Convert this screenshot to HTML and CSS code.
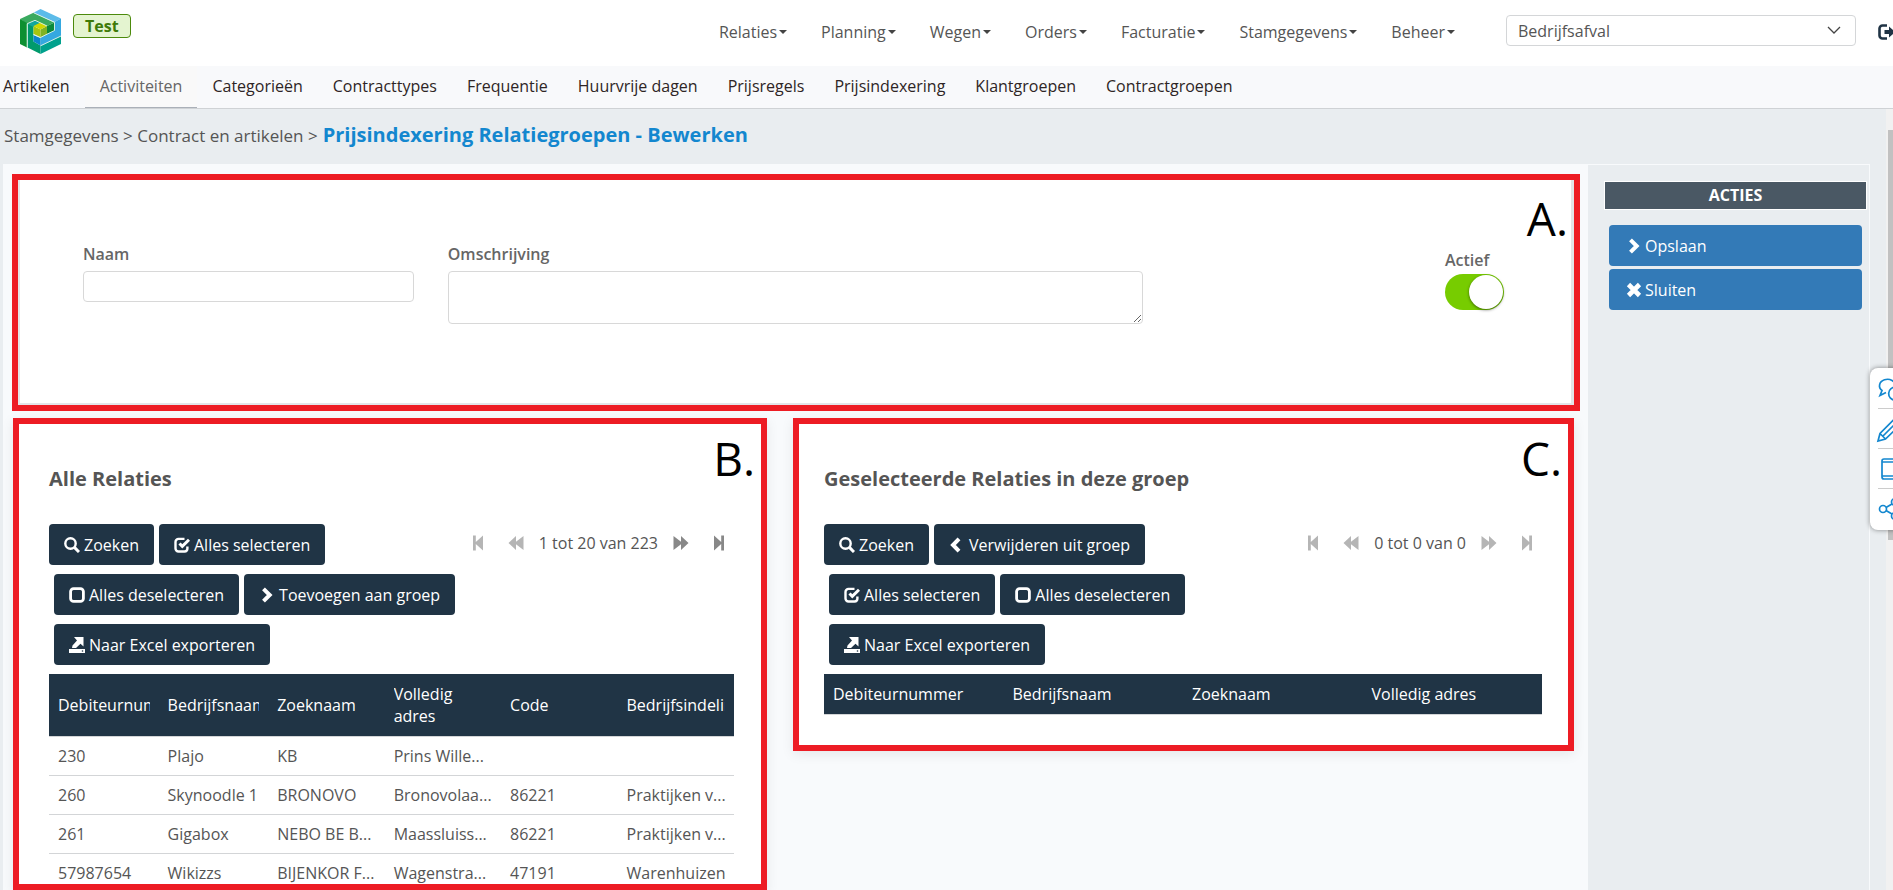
FILE: index.html
```html
<!DOCTYPE html>
<html lang="nl">
<head>
<meta charset="utf-8">
<title>Prijsindexering Relatiegroepen - Bewerken</title>
<link rel="stylesheet" href="styles.css">
</head>
<body>
<svg class="sprite" aria-hidden="true">
  <symbol id="i-search" viewBox="0 0 16 16"><circle cx="6.500" cy="6.500" r="5.200" fill="none" stroke="currentColor" stroke-width="2.400"/><path d="M10.400 10.400L15 15" stroke="currentColor" stroke-width="3"/></symbol>
  <symbol id="i-check" viewBox="0 0 16 16"><path d="M10.500 1.900H4.500A3 3 0 0 0 1.500 4.900V11.500A3 3 0 0 0 4.500 14.500H10.500A3 3 0 0 0 13.400 11.500V9.500" fill="none" stroke="currentColor" stroke-width="2.400"/><path d="M5.500 6.500L8.300 9.400L15 2.700" fill="none" stroke="currentColor" stroke-width="3"/></symbol>
  <symbol id="i-box" viewBox="0 0 16 16"><rect x="1.600" y="1.600" width="12.800" height="12.800" rx="3" fill="none" stroke="currentColor" stroke-width="2.800"/></symbol>
  <symbol id="i-right" viewBox="0 0 16 16"><path d="M4.500 1.800L10.700 8L4.500 14.200" fill="none" stroke="currentColor" stroke-width="4"/></symbol>
  <symbol id="i-left" viewBox="0 0 16 16"><path d="M10 1.800L4 8L10 14.200" fill="none" stroke="currentColor" stroke-width="4"/></symbol>
  <symbol id="i-export" viewBox="0 0 16 16"><path d="M0 12H16V16H0zM5 0H14.500V9.500L11.500 6.700L7 11H3L3.500 8.500L8 3.500z" fill="currentColor"/><circle cx="13.500" cy="14" r="0.800" fill="#203445"/></symbol>
  <symbol id="i-cross" viewBox="0 0 16 16"><path d="M2.500 2.500L13.500 13.500M13.500 2.500L2.500 13.500" stroke="currentColor" stroke-width="4.600"/></symbol>
  <symbol id="i-first" viewBox="0 0 16 16"><path d="M3 .5h2.800V7L13 .5v15L5.800 9V15.500H3z" fill="currentColor"/></symbol>
  <symbol id="i-prev" viewBox="0 0 16 16"><path d="M.5 8L8 1v5.800L15.500 1v14L8 9.200V15z" fill="currentColor"/></symbol>
  <symbol id="i-next" viewBox="0 0 16 16"><path d="M15.500 8L8 1v5.800L.5 1v14L8 9.200V15z" fill="currentColor"/></symbol>
  <symbol id="i-last" viewBox="0 0 16 16"><path d="M13 .5h-2.800V7L3 .5v15L10.200 9V15.500H13z" fill="currentColor"/></symbol>
</svg>

<header class="topbar">
  <a class="logo" href="#" aria-label="Home">
    <svg width="42" height="46" viewBox="0 0 42 46">
      <path d="M13.500 3.700L20.500 0L41 9.500L34.500 13z" fill="#5cbbe9"/>
      <path d="M34.500 13L41 9.500V27L20.500 37V28.500L34.500 21z" fill="#35a8e0"/>
      <path d="M0 10L13.500 3.700L34.500 13.500L27 17L15 11.500L7 15z" fill="#3aaa5f"/>
      <path d="M27 17L34.500 13.500V21.500L27 25z" fill="#0c8a3a"/>
      <path d="M0 10L7 14V38.500L0 35z" fill="#0d8f31"/>
      <path d="M7.500 15L15 11.500L20.500 14L13.500 17.500V32.500L20.500 36.500V45L7.500 38.500z" fill="#009a6c"/>
      <path d="M7.500 15L15 11.500L27 17V18L20.500 14L13.500 18z" fill="#12a79c"/>
      <path d="M13.500 26L20.500 29V36.500L13.500 32.500z" fill="#0a84cb"/>
      <path d="M20.500 37L41 27V35L20.500 45z" fill="#00a18d"/>
      <path d="M13.500 17L20.500 20.500V28.500L13.500 25z" fill="#a6c50f"/>
      <path d="M20.500 20.500L27 17V25L20.500 28.500z" fill="#7fb224"/>
      <path d="M13.500 17L20.500 13.500L27 17L20.500 20.500z" fill="#cfd800"/>
      <path d="M7.200 38.500V14.700L15 11.300L27 17M13.500 3.700L34.500 13.300V21.500L20.500 28.500L13.500 25.500M20.500 36.800L41 27" fill="none" stroke="#dff3ea" stroke-width=".9"/>
    </svg>
  </a>
  <span class="env">Test</span>
  <nav class="mainnav">
    <a href="#">Relaties</a><a href="#">Planning</a><a href="#">Wegen</a><a href="#">Orders</a><a href="#">Facturatie</a><a href="#">Stamgegevens</a><a href="#">Beheer</a>
  </nav>
  <div class="picker">
    <select aria-label="Afdeling"><option>Bedrijfsafval</option></select>
    <svg width="14" height="8" viewBox="0 0 14 8"><path d="M1 1L7 7L13 1" fill="none" stroke="#444" stroke-width="1.300"/></svg>
  </div>
  <a class="logout" href="#" aria-label="Uitloggen">
    <svg width="18" height="16" viewBox="0 0 18 16"><path d="M9 1.500H4.500A3 3 0 0 0 1.500 4.500V11.500A3 3 0 0 0 4.500 14.500H9" fill="none" stroke="#203445" stroke-width="2.600"/><path d="M6.500 6H11V2.500L17.500 8L11 13.500V10H6.500z" fill="#203445"/></svg>
  </a>
</header>

<nav class="subnav">
  <a href="#">Artikelen</a><a href="#" class="active">Activiteiten</a><a href="#">Categorieën</a><a href="#">Contracttypes</a><a href="#">Frequentie</a><a href="#">Huurvrije dagen</a><a href="#">Prijsregels</a><a href="#">Prijsindexering</a><a href="#">Klantgroepen</a><a href="#">Contractgroepen</a>
</nav>

<div class="page">
  <div class="page-body">
    <div class="crumbs">
      <span>Stamgegevens &gt; Contract en artikelen &gt;</span>
      <h1>Prijsindexering Relatiegroepen - Bewerken</h1>
    </div>
    <div class="columns">
      <main class="content">
        <section class="marked details">
          <span class="mark">A.</span>
          <form class="card form">
            <div class="field name"><label for="naam">Naam</label><input id="naam" type="text"></div>
            <div class="field desc"><label for="oms">Omschrijving</label><textarea id="oms"></textarea></div>
            <div class="field active-field"><label for="actief">Actief</label><input id="actief" class="switch" type="checkbox" role="switch" checked></div>
          </form>
        </section>
        <div class="lists">
          <section class="marked list all">
            <span class="mark">B.</span>
            <h2>Alle Relaties</h2>
            <div class="toolbar">
              <div class="buttons">
                <div class="row"><button class="btn"><svg><use href="#i-search"/></svg>Zoeken</button><button class="btn"><svg><use href="#i-check"/></svg>Alles selecteren</button></div>
                <div class="row indent"><button class="btn"><svg><use href="#i-box"/></svg>Alles deselecteren</button><button class="btn"><svg><use href="#i-right"/></svg>Toevoegen aan groep</button></div>
                <div class="row indent"><button class="btn"><svg><use href="#i-export"/></svg>Naar Excel exporteren</button></div>
              </div>
              <div class="pager">
                <button disabled aria-label="Eerste"><svg><use href="#i-first"/></svg></button>
                <button disabled aria-label="Vorige"><svg><use href="#i-prev"/></svg></button>
                <span>1 tot 20 van 223</span>
                <button aria-label="Volgende"><svg><use href="#i-next"/></svg></button>
                <button aria-label="Laatste"><svg><use href="#i-last"/></svg></button>
              </div>
            </div>
            <table>
              <colgroup><col class="w16"><col class="w16"><col class="w17"><col class="w17"><col class="w17"><col class="w17"></colgroup>
              <thead><tr><th><span>Debiteurnummer</span></th><th><span>Bedrijfsnaam</span></th><th><span>Zoeknaam</span></th><th><span>Volledig adres</span></th><th><span>Code</span></th><th><span>Bedrijfsindeling</span></th></tr></thead>
              <tbody>
                <tr><td>230</td><td>Plajo</td><td>KB</td><td>Prins Wille...</td><td></td><td></td></tr>
                <tr><td>260</td><td>Skynoodle 1</td><td>BRONOVO</td><td>Bronovolaa...</td><td>86221</td><td>Praktijken v...</td></tr>
                <tr><td>261</td><td>Gigabox</td><td>NEBO BE B...</td><td>Maassluiss...</td><td>86221</td><td>Praktijken v...</td></tr>
                <tr><td>57987654</td><td>Wikizzs</td><td>BIJENKOR F...</td><td>Wagenstra...</td><td>47191</td><td>Warenhuizen</td></tr>
              </tbody>
            </table>
          </section>
          <section class="marked list selected">
            <span class="mark">C.</span>
            <h2>Geselecteerde Relaties in deze groep</h2>
            <div class="toolbar">
              <div class="buttons">
                <div class="row"><button class="btn"><svg><use href="#i-search"/></svg>Zoeken</button><button class="btn"><svg><use href="#i-left"/></svg>Verwijderen uit groep</button></div>
                <div class="row indent"><button class="btn"><svg><use href="#i-check"/></svg>Alles selecteren</button><button class="btn"><svg><use href="#i-box"/></svg>Alles deselecteren</button></div>
                <div class="row indent"><button class="btn"><svg><use href="#i-export"/></svg>Naar Excel exporteren</button></div>
              </div>
              <div class="pager">
                <button disabled aria-label="Eerste"><svg><use href="#i-first"/></svg></button>
                <button disabled aria-label="Vorige"><svg><use href="#i-prev"/></svg></button>
                <span>0 tot 0 van 0</span>
                <button disabled aria-label="Volgende"><svg><use href="#i-next"/></svg></button>
                <button disabled aria-label="Laatste"><svg><use href="#i-last"/></svg></button>
              </div>
            </div>
            <table>
              <thead><tr><th>Debiteurnummer</th><th>Bedrijfsnaam</th><th>Zoeknaam</th><th>Volledig adres</th></tr></thead>
            </table>
          </section>
        </div>
      </main>
      <aside class="actions">
        <h3>ACTIES</h3>
        <button class="action"><svg><use href="#i-right"/></svg>Opslaan</button>
        <button class="action"><svg><use href="#i-cross"/></svg>Sluiten</button>
      </aside>
    </div>
  </div>
  <div class="scrolltrack"><div class="thumb"></div></div>
</div>

<div class="dock">
  <a href="#" aria-label="Chat"><svg width="24" height="24" viewBox="0 0 24 24"><path d="M8 15.500L2 18.500L4 13.500A8 6.500 0 1 1 17.500 9"/><path d="M22 21A6.500 6.500 0 1 1 22.500 13V20z"/></svg></a>
  <a href="#" aria-label="Notitie"><svg width="24" height="24" viewBox="0 0 24 24"><path d="M0 24L2 16.500L15 3.500L21 9L7.500 22zM2 16.500L7.500 22M5 19L17.500 6.500"/></svg></a>
  <a href="#" aria-label="Apparaat"><svg width="24" height="24" viewBox="0 0 24 24"><rect x="4" y="2" width="17" height="20" rx="2"/><path d="M4 5H21M4 19H21"/></svg></a>
  <a href="#" aria-label="Delen"><svg width="24" height="24" viewBox="0 0 24 24"><circle cx="5" cy="12" r="3.500"/><circle cx="17" cy="5" r="3.500"/><circle cx="17" cy="19" r="3.500"/><path d="M8 10.500L14 7M8 13.500L14 17"/></svg></a>
</div>
</body>
</html>
```

FILE: styles.css
```css
* { box-sizing: border-box; }
body {
  margin: 0;
  height: 100vh;
  overflow: hidden;
  display: flex;
  flex-direction: column;
  font: 16px/22px "Open Sans", sans-serif;
  color: #555;
  background: #e9edf0;
}
a { color: inherit; text-decoration: none; }
button, input, select, textarea { font: inherit; color: inherit; }
.sprite { display: none; }

.topbar {
  display: flex;
  align-items: flex-start;
  height: 66px;
  flex: none;
  background: #fff;
  overflow: hidden;
}
.logo { margin: 9px 11px 0 20px; height: 46px; }
.env {
  margin-top: 14px;
  padding: 0 11px;
  height: 24px;
  line-height: 22px;
  border: 1px solid #4c8a0c;
  border-radius: 4px;
  background: #e4f4d0;
  color: #3f7a08;
  font-weight: 700;
}
.mainnav { display: flex; gap: 34px; margin: 21px 51px 0 auto; }
.mainnav a::after {
  content: "";
  display: inline-block;
  margin-left: 2px;
  vertical-align: 4px;
  border: 4px solid transparent;
  border-top-color: #444;
  border-bottom: 0;
}
.picker { position: relative; width: 350px; margin: 15px 22px 0 0; }
.picker select {
  appearance: none;
  display: block;
  width: 100%;
  height: 31px;
  padding: 0 11px;
  border: 1px solid #d4d6d8;
  border-radius: 4px;
  background: #fff;
}
.picker svg { position: absolute; right: 15px; top: 11px; }
.logout { width: 15px; height: 16px; margin-top: 23px; }

.subnav {
  display: flex;
  flex: none;
  height: 43px;
  border-bottom: 1px solid #cfd2d5;
  background: #f8f9fb;
  color: #2e2525;
}
.subnav a { padding: 9px 15px; }
.subnav a:first-child { padding-left: 3px; }
.subnav .active { background: #f9f9f9; color: #666; border-bottom: 1px solid #aab0b8; }

.page { display: flex; flex: 1; min-height: 0; }
.page-body { display: flex; flex-direction: column; flex: 1; min-width: 0; }
.crumbs { display: flex; align-items: baseline; gap: 5px; height: 55px; padding: 11px 4px; flex: none; font-size: 17px; }
.crumbs h1 { margin: 0; font-size: 20px; line-height: 30px; color: #1387cf; }
.columns { display: flex; flex: 1; min-height: 0; padding: 0 16px 0 3px; }

.content {
  display: flex;
  flex-direction: column;
  gap: 7px;
  flex: 1;
  min-width: 0;
  padding: 10px 8px 0 9px;
  background: #f8fafc;
}
.marked { position: relative; border: 6px solid #ed1c24; background: #fff; }
.mark { position: absolute; top: 0; right: 6px; font-size: 46px; line-height: 68px; color: #000; }
.details { padding: 0 3px 2px 2px; background: #e3e5e8; flex: none; }
.details .mark { top: 4px; }
.form { display: flex; height: 223px; padding: 63px 67px 0 63px; background: #fff; }
.field { display: flex; flex-direction: column; gap: 6px; }
.field label { font-weight: 600; color: #666; }
.name { flex: 331 1 0; margin-right: 34px; }
.desc { flex: 696 1 0; }
.field input[type=text], .field textarea { width: 100%; border: 1px solid #d8d8d8; border-radius: 4px; background: #fff; }
.field input[type=text] { height: 31px; }
.field textarea { height: 53px; }
.active-field { flex: 361 1 0; gap: 3px; align-items: flex-end; margin-top: 6px; }
.active-field label { width: 59px; }
.switch {
  appearance: none;
  width: 59px;
  height: 36px;
  margin: 0;
  border-radius: 18px;
  background: #7c0;
}
.switch::before {
  content: "";
  display: block;
  width: 34px;
  height: 34px;
  margin: 1px 1px 0 auto;
  border-radius: 50%;
  background: #fff;
  box-shadow: 0 1px 3px rgba(0, 0, 0, .5);
}

.lists {
  display: grid;
  grid-template-columns: 754fr 781fr;
  gap: 26px;
  align-items: start;
  flex: 1;
  min-height: 0;
  padding: 0 6px 0 1px;
}
.list { padding: 40px 27px 30px 30px; min-width: 0; box-shadow: 0 3px 12px rgba(0, 0, 0, .08); }
.all { height: 100%; overflow: hidden; padding-bottom: 0; }
.selected { padding-left: 25px; padding-right: 26px; }
.list h2 { margin: 0 0 30px; font-size: 20px; line-height: 30px; }
.toolbar { display: flex; justify-content: space-between; }
.row { display: flex; gap: 5px; margin-bottom: 9px; }
.indent { margin-left: 5px; }
.btn {
  display: flex;
  align-items: center;
  gap: 4px;
  height: 41px;
  padding: 0 15px;
  border: 0;
  border-radius: 4px;
  background: #203445;
  color: #fff;
  white-space: nowrap;
}
.btn svg, .action svg { width: 16px; height: 16px; }
.pager { display: flex; align-items: center; height: 38px; margin-right: -4px; white-space: nowrap; }
.pager button { width: 38px; height: 38px; padding: 0; border: 0; background: none; color: #888; }
.pager button:disabled { color: #b5b5b5; }
.pager span { margin: 0 4px; }
.pager svg { display: block; width: 16px; height: 16px; margin: auto; }

table { width: 100%; table-layout: fixed; border-collapse: collapse; }
th, td { padding: 8px 9px; overflow: hidden; text-align: left; border-bottom: 1px solid #d3d5d7; }
th { padding: 9px; background: #203445; color: #fff; font-weight: 400; }
th span { display: block; overflow: hidden; }
td { white-space: nowrap; }
.w16 { width: 16%; }
.w17 { width: 17%; }

.actions { width: 282px; flex: none; padding: 16px 2px 0 16px; border: solid #f8fafc; border-width: 1px 1px 0 0; }
.actions h3 {
  margin: 0 0 15px;
  border: 1px solid #fff;
  background: #4a5864;
  color: #fff;
  font-size: 16px;
  line-height: 27px;
  text-align: center;
}
.action {
  display: flex;
  align-items: center;
  gap: 3px;
  width: calc(100% - 10px);
  height: 41px;
  margin: 0 5px 3px;
  padding: 0 17px;
  border: 0;
  border-radius: 4px;
  background: #337ab7;
  color: #fff;
}

.scrolltrack { width: 7px; flex: none; padding: 21px 0 0 2px; background: #f1f1f1; overflow: hidden; }
.thumb { height: 54%; background: #c1c1c1; }

.dock {
  position: fixed;
  right: -20px;
  top: 368px;
  width: 43px;
  padding: 1px 8px;
  border-radius: 8px;
  background: #fff;
  box-shadow: 0 0 5px rgba(0, 0, 0, .45);
}
.dock a { display: block; height: 40px; padding-top: 8px; border-bottom: 1px solid #ccc; }
.dock a:last-child { border: 0; }
.dock svg { display: block; overflow: visible; fill: none; stroke: #1387cf; stroke-width: 1.700; }
```
